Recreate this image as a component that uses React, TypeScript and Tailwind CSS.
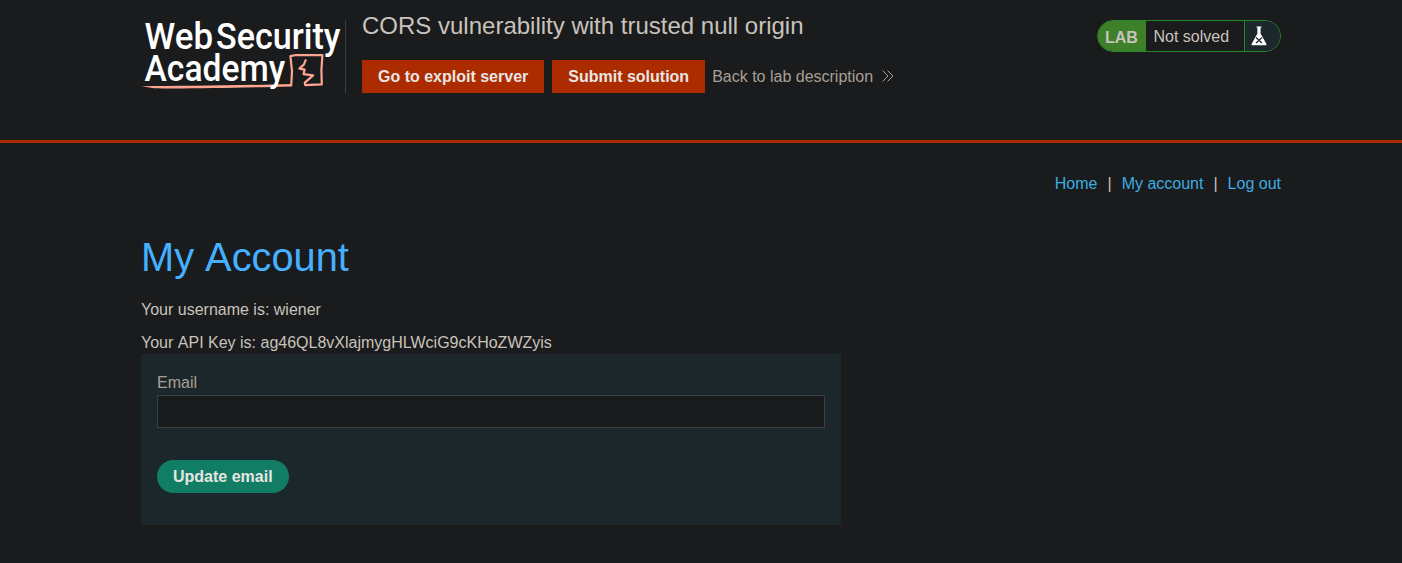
function AcademyLogo() {
  return (
    <svg width="204" height="73" viewBox="141 20 204 73" className="block overflow-visible" role="img">
      <path
        d="M291.2 86L292 71L290.4 56.2L296 55L322.4 55.2C321.2 66 321 74 321.8 84.3L305.2 85.2L304.8 82.6L313.2 75.4L303.6 74.2L304.6 69.6L299.4 68.6L303.8 64.6L306 59.4"
        fill="none"
        stroke="#ffa590"
        strokeWidth="2.2"
        strokeLinejoin="round"
      />
      <path d="M141.5 86.3C180 85.8 235 85.6 292 84V86.4C245 87.6 180 89 154 88.2Z" fill="#ffa590" />
      <g fill="#ffffff" fontFamily="Roboto, sans-serif" fontWeight="500">
        <text x="144.6" y="48.5" fontSize="37.5" textLength="68.5" lengthAdjust="spacingAndGlyphs">Web</text>
        <text x="216" y="48.5" fontSize="37.5" textLength="124.5" lengthAdjust="spacingAndGlyphs">Security</text>
        <text x="144.6" y="81.2" fontSize="37.5" textLength="140.5" lengthAdjust="spacingAndGlyphs">Academy</text>
      </g>
    </svg>
  );
}

function Flask() {
  return (
    <svg width="16" height="20" viewBox="0 0 16 20" className="block">
      <path d="M5.5 0.4H10.5V1.5H9.6V7.6L15.4 18V19.2H0.6V18L6.4 7.6V1.5H5.5Z" fill="#ffffff" />
      <path d="M5 11.5L11 17M11 11.5L5 17" stroke="#1c282c" strokeWidth="1.1" fill="none" />
    </svg>
  );
}

function ActionLink({ label }: { label: string }) {
  return (
    <a href="#" className="flex h-[33px] items-center bg-[#ac2b00] px-4 font-bold text-[#e8e6e3]">
      {label}
    </a>
  );
}

export default function App() {
  return (
    <div className="min-h-screen bg-[#1a1b1c] font-['Liberation_Sans',Arial,sans-serif] text-base leading-[18px] text-[#c8c3bc]">
      <header className="h-[143px] border-b-[3px] border-[#ac2b00]">
        <div className="ml-[141px] flex w-[1140px] items-start justify-between">
          <div className="flex">
            <div className="mt-5 h-[73px] w-[205px] border-r border-[#3b3f41]">
              <AcademyLogo />
            </div>
            <div className="pl-4">
              <h2 className="mt-3 text-2xl leading-7">CORS vulnerability with trusted null origin</h2>
              <div className="mt-5 flex gap-2">
                <ActionLink label="Go to exploit server" />
                <ActionLink label="Submit solution" />
                <a href="#" className="-ml-px flex items-center text-[#a8a095]">
                  Back to lab description
                  <svg width="12" height="12" viewBox="0 0 12 12" className="mb-px ml-[9px]" fill="none" stroke="currentColor">
                    <path d="M0.5 0.5L6 6L0.5 11.5M5.5 0.5L11 6L5.5 11.5" />
                  </svg>
                </a>
              </div>
            </div>
          </div>
          <div className="mt-5 flex h-8 w-[184px] overflow-hidden rounded-full border border-[#26862a]">
            <span className="flex w-12 items-center bg-[#3e7f2a] pt-[3px] pl-[7px] font-bold">LAB</span>
            <span className="flex flex-1 items-center pt-0.5 pl-[7.5px]">Not solved</span>
            <span className="flex w-9 items-center border-l border-[#26862a] bg-[#1c282c] pl-1.5">
              <Flask />
            </span>
          </div>
        </div>
      </header>
      <main className="ml-[141px] w-[1140px]">
        <nav className="flex justify-end gap-[10px] pt-8 text-[#3cade0]">
          <a href="#">Home</a>
          <span className="text-[#c8c3bc]">|</span>
          <a href="#">My account</a>
          <span className="text-[#c8c3bc]">|</span>
          <a href="#">Log out</a>
        </nav>
        <h1 className="mt-10 text-[39.8px] leading-[48px] text-[#45b0ff]">
          My <span className="inline-block">Account</span>
        </h1>
        <p className="mt-5">Your username is: wiener</p>
        <p className="mt-[15px]">
          Your <span className="inline-block">API Key is: ag46QL8vXlajmygHLWciG9cKHoZWZyis</span>
        </p>
        <form className="mt-0.5 h-[171px] w-[700px] bg-[#1c272b] px-4 pt-5">
          <label htmlFor="email" className="block text-[#a8a095]">Email</label>
          <input id="email" type="email" className="mt-[3px] block h-[33px] w-full border border-[#3a4041] bg-[#1a1b1c] px-2 outline-none" />
          <button type="button" className="mt-8 flex h-[33px] items-center rounded-full bg-[#127d65] px-4 font-bold text-[#e8e6e3]">
            Update email
          </button>
        </form>
      </main>
    </div>
  );
}
